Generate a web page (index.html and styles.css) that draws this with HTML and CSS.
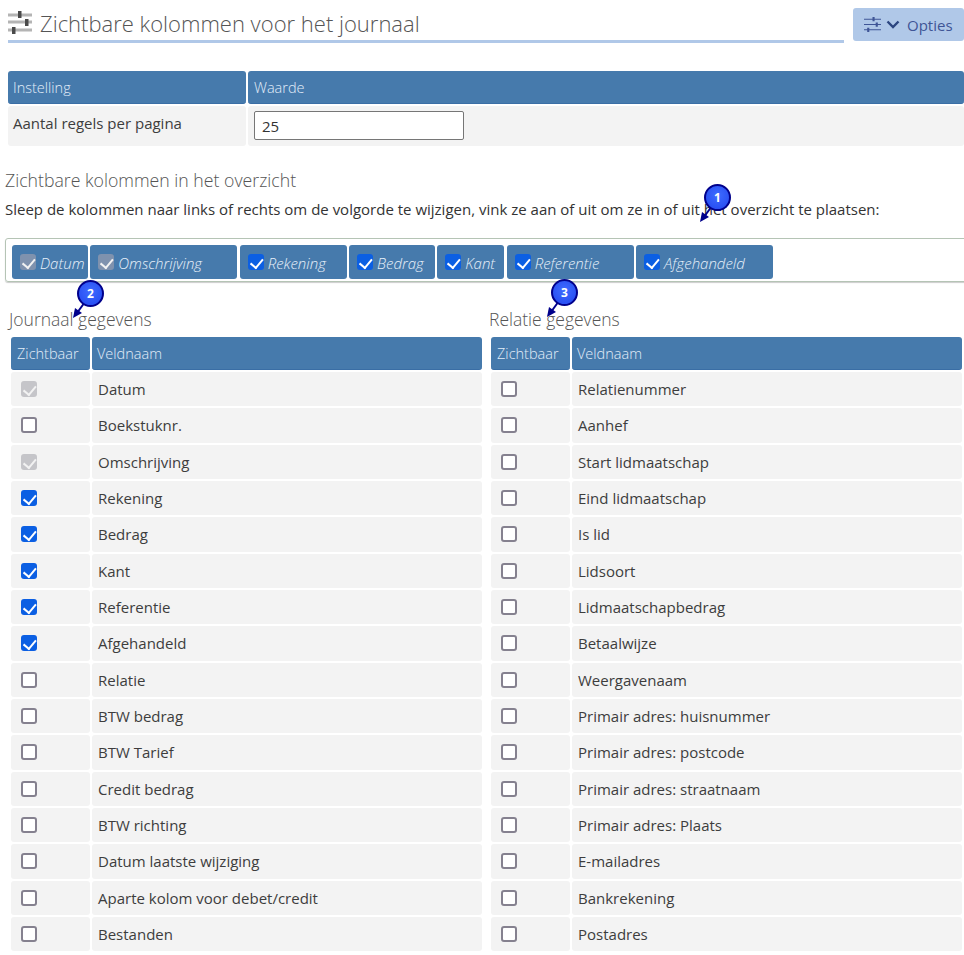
FILE: index.html
```html
<!DOCTYPE html>
<html lang="nl">
<head>
<meta charset="utf-8">
<title>Zichtbare kolommen voor het journaal</title>
<link rel="stylesheet" href="styles.css">
</head>
<body>
<main class="page">
  <header class="top">
    <h1 class="title">
      <svg class="title-icon" viewBox="0 0 24 23" width="24" height="23"><path fill="#b4b4b4" d="M0 2.500h24v3H0zM0 9.500h24v3H0zM0 17.500h24v3H0z"/><path fill="#4a4a4a" d="M10 0h3.500v7H10zM17 8h3.500v7H17zM4 16h3.500v7H4z"/></svg>
      <span>Zichtbare kolommen voor het journaal</span>
    </h1>
    <button class="options" type="button">
      <svg viewBox="0 0 16 14" width="17" height="15"><path fill="none" stroke="#3f5596" stroke-width="1" d="M0 2h16M0 7h16M0 12h16"/><path fill="none" stroke="#3f5596" stroke-width="2" d="M9 0v4M12 5v4M4 10v4"/></svg>
      <svg viewBox="0 0 14 9" width="14" height="9"><path fill="none" stroke="#2c4680" stroke-width="2.400" d="M1.500 1.500L7 7l5.500-5.500"/></svg>
      <span class="options-label">Opties</span>
    </button>
  </header>

  <table class="grid settings">
    <thead><tr><th class="c-setting">Instelling</th><th class="c-value">Waarde</th></tr></thead>
    <tbody><tr><td class="setting-label">Aantal regels per pagina</td><td class="setting-value"><input class="text-input" type="text" value="25"></td></tr></tbody>
  </table>

  <h2 class="section">Zichtbare kolommen in het overzicht</h2>
  <p class="intro">Sleep de kolommen naar links of rechts om de volgorde te wijzigen, vink ze aan of uit om ze in of uit het overzicht te plaatsen:</p>

  <div class="chips">
    <label class="chip chip-1 chip-off"><input class="check" type="checkbox" checked disabled><em>Datum</em></label>
    <label class="chip chip-2 chip-off"><input class="check" type="checkbox" checked disabled><em>Omschrijving</em></label>
    <label class="chip chip-3"><input class="check" type="checkbox" checked><em>Rekening</em></label>
    <label class="chip chip-4"><input class="check" type="checkbox" checked><em>Bedrag</em></label>
    <label class="chip chip-5"><input class="check" type="checkbox" checked><em>Kant</em></label>
    <label class="chip chip-6"><input class="check" type="checkbox" checked><em>Referentie</em></label>
    <label class="chip chip-7"><input class="check" type="checkbox" checked><em>Afgehandeld</em></label>
  </div>

  <div class="columns">
    <section class="col col-left">
      <h3 class="sub">Journaal gegevens</h3>
      <table class="grid fields">
        <thead><tr><th class="c-check">Zichtbaar</th><th>Veldnaam</th></tr></thead>
        <tbody>
          <tr><td><input class="check" type="checkbox" checked disabled></td><td>Datum</td></tr>
          <tr><td><input class="check" type="checkbox"></td><td>Boekstuknr.</td></tr>
          <tr><td><input class="check" type="checkbox" checked disabled></td><td>Omschrijving</td></tr>
          <tr><td><input class="check" type="checkbox" checked></td><td>Rekening</td></tr>
          <tr><td><input class="check" type="checkbox" checked></td><td>Bedrag</td></tr>
          <tr><td><input class="check" type="checkbox" checked></td><td>Kant</td></tr>
          <tr><td><input class="check" type="checkbox" checked></td><td>Referentie</td></tr>
          <tr><td><input class="check" type="checkbox" checked></td><td>Afgehandeld</td></tr>
          <tr><td><input class="check" type="checkbox"></td><td>Relatie</td></tr>
          <tr><td><input class="check" type="checkbox"></td><td>BTW bedrag</td></tr>
          <tr><td><input class="check" type="checkbox"></td><td>BTW Tarief</td></tr>
          <tr><td><input class="check" type="checkbox"></td><td>Credit bedrag</td></tr>
          <tr><td><input class="check" type="checkbox"></td><td>BTW richting</td></tr>
          <tr><td><input class="check" type="checkbox"></td><td>Datum laatste wijziging</td></tr>
          <tr><td><input class="check" type="checkbox"></td><td>Aparte kolom voor debet/credit</td></tr>
          <tr><td><input class="check" type="checkbox"></td><td>Bestanden</td></tr>
        </tbody>
      </table>
    </section>
    <section class="col col-right">
      <h3 class="sub">Relatie gegevens</h3>
      <table class="grid fields">
        <thead><tr><th class="c-check">Zichtbaar</th><th>Veldnaam</th></tr></thead>
        <tbody>
          <tr><td><input class="check" type="checkbox"></td><td>Relatienummer</td></tr>
          <tr><td><input class="check" type="checkbox"></td><td>Aanhef</td></tr>
          <tr><td><input class="check" type="checkbox"></td><td>Start lidmaatschap</td></tr>
          <tr><td><input class="check" type="checkbox"></td><td>Eind lidmaatschap</td></tr>
          <tr><td><input class="check" type="checkbox"></td><td>Is lid</td></tr>
          <tr><td><input class="check" type="checkbox"></td><td>Lidsoort</td></tr>
          <tr><td><input class="check" type="checkbox"></td><td>Lidmaatschapbedrag</td></tr>
          <tr><td><input class="check" type="checkbox"></td><td>Betaalwijze</td></tr>
          <tr><td><input class="check" type="checkbox"></td><td>Weergavenaam</td></tr>
          <tr><td><input class="check" type="checkbox"></td><td>Primair adres: huisnummer</td></tr>
          <tr><td><input class="check" type="checkbox"></td><td>Primair adres: postcode</td></tr>
          <tr><td><input class="check" type="checkbox"></td><td>Primair adres: straatnaam</td></tr>
          <tr><td><input class="check" type="checkbox"></td><td>Primair adres: Plaats</td></tr>
          <tr><td><input class="check" type="checkbox"></td><td>E-mailadres</td></tr>
          <tr><td><input class="check" type="checkbox"></td><td>Bankrekening</td></tr>
          <tr><td><input class="check" type="checkbox"></td><td>Postadres</td></tr>
        </tbody>
      </table>
    </section>
  </div>

  <div class="callout callout-1"><svg class="arrow" viewBox="0 0 24 30" width="24" height="30"><path fill="none" stroke="#00008b" stroke-width="2" d="M17 6L4 24"/><path fill="#00008b" d="M0 29l2-10 7 5z"/></svg><span class="badge">1</span></div>
  <div class="callout callout-2"><svg class="arrow" viewBox="0 0 24 30" width="24" height="30"><path fill="none" stroke="#00008b" stroke-width="2" d="M17 6L4 24"/><path fill="#00008b" d="M0 29l2-10 7 5z"/></svg><span class="badge">2</span></div>
  <div class="callout callout-3"><svg class="arrow" viewBox="0 0 24 30" width="24" height="30"><path fill="none" stroke="#00008b" stroke-width="2" d="M17 6L4 24"/><path fill="#00008b" d="M0 29l2-10 7 5z"/></svg><span class="badge">3</span></div>
</main>
</body>
</html>
```

FILE: styles.css
```css
* { box-sizing: border-box; }
html, body { margin: 0; padding: 0; overflow-x: hidden; background: #fff; }
body { font-family: "Open Sans", "Noto Sans", sans-serif; color: #333; }
.page { position: relative; width: 964px; padding: 8px 0 0 0; }

.top { display: flex; align-items: flex-start; padding-left: 8px; height: 35px; }
.title { flex: 0 0 836px; height: 35px; margin: 0; display: flex; align-items: center; gap: 8px; border-bottom: 3px solid #b0c8e8; font-size: 22px; font-weight: 300; color: #555; white-space: nowrap; padding-bottom: 3px; }
.title-icon { flex: none; }
.options { margin-left: 9px; flex: 0 0 111px; height: 33px; display: flex; align-items: center; gap: 5px; padding: 0 0 0 11px; border: 0; border-radius: 3px; background: #b0c8e8; color: #3f5596; font: 400 15px "Open Sans", sans-serif; }
.options-label { margin-left: 2px; }

.check { appearance: none; -webkit-appearance: none; position: relative; display: block; flex: none; width: 16px; height: 16px; margin: 0; border: 2px solid #85818f; border-radius: 3px; background: #fff; }
.check:checked { border: 0; background: #0b5fe3; }
.check:checked::after { content: ""; position: absolute; left: 5px; top: 2px; width: 5.500px; height: 9.500px; border: solid #fff; border-width: 0 2.500px 2.500px 0; transform: rotate(40deg); }
.check:checked:disabled { background: #c5c5c9; }
.check:checked:disabled::after { border-color: #f2f2f2; }
.chip-off .check:checked:disabled { background: #7f92ae; }

.grid { border-collapse: separate; border-spacing: 2px; table-layout: fixed; }
.grid th { background: #467aac; color: #e2edf9; font-weight: 300; font-size: 14.500px; text-align: left; height: 33px; padding: 0 5px; border-radius: 3px; border-bottom: 1px solid #3a6ea5; }
.grid td { background: #f3f3f3; border-radius: 3px; padding: 0 6px; font-size: 15px; color: #3d3d3d; }
.grid td .check { margin-left: 4px; }

.settings { width: 960px; margin: 26px 0 0 6px; }
.c-setting { width: 238px; }
.grid .c-value { padding-left: 6px; }
.setting-label { height: 40px; }
.grid .setting-label { padding-left: 5px; padding-top: 7px; vertical-align: top; }
.grid .setting-value { vertical-align: top; padding-top: 5px; }
.text-input { display: block; width: 210px; height: 29px; border: 1px solid #767676; border-radius: 2px; padding: 0 7px; font: 400 15px "Open Sans", sans-serif; color: #333; background: #fff; }

.section { margin: 20px 0 0 5px; font-size: 17.700px; font-weight: 300; line-height: 24px; color: #555; }
.intro { margin: 6px 0 0 5px; font-size: 15px; line-height: 22px; color: #333; white-space: nowrap; }

.chips { display: flex; gap: 2.330px; margin: 18px -10px 0 5px; height: 44px; padding: 6px; border: 1px solid #b5c4b5; border-radius: 3px; box-shadow: 0 1px 1px #ccc; }
.chip { display: flex; align-items: center; gap: 4px; height: 34px; padding-left: 8px; background: #467aac; border-radius: 3px; color: #e6f0fa; font-size: 15px; font-weight: 300; white-space: nowrap; }
.chip em { font-style: italic; padding-top: 2px; }
.chip-1 { width: 76px; }
.chip-2 { width: 147px; }
.chip-3 { width: 107px; }
.chip-4 { width: 86px; }
.chip-5 { width: 67px; }
.chip-6 { width: 127px; }
.chip-7 { width: 137px; }

.columns { display: flex; margin-top: 25px; padding-left: 8px; }
.col { flex: none; }
.col-left { width: 480px; }
.col-right { width: 475px; }
.sub { margin: 0 0 0 1px; font-size: 17.500px; font-weight: 300; line-height: 24px; color: #555; }
.fields { width: 475px; margin: 4px 0 0 1px; }
.fields .c-check { width: 79px; padding-left: 6px; }
.fields tbody td { height: 34.330px; }

.callout { position: absolute; width: 40px; height: 40px; }
.callout-1 { left: 697px; top: 184px; }
.callout-2 { left: 70px; top: 280px; }
.callout-3 { left: 544px; top: 279px; }
.arrow { position: absolute; left: 3px; top: 9px; }
.badge { position: absolute; left: 7px; top: 0; width: 27px; height: 27px; border-radius: 50%; background: radial-gradient(circle at 50% 40%, #3f6cff, #2146ef); border: 2px solid #00008b; color: #fff; font: 700 12px/23px "Open Sans", sans-serif; text-align: center; }
```
